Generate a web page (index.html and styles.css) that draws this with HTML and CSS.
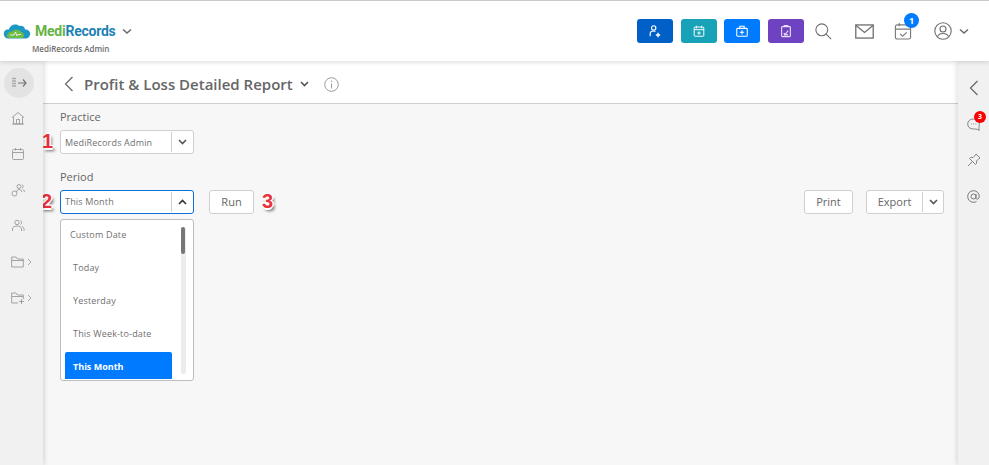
FILE: index.html
```html
<!DOCTYPE html>
<html lang="en">
<head>
<meta charset="utf-8">
<title>Profit &amp; Loss Detailed Report</title>
<link rel="stylesheet" href="styles.css">
</head>
<body>
<div class="app">
  <header class="topbar">
    <div class="brand">
      <div class="brand-row">
        <svg class="logo" width="28" height="16" viewBox="0 0 28 16"><path d="M1 12C0 8 3 6 6 6.500C7 2 13 0 16 3C19 2 22 4 22 6.500C25 6 28 9 27 12C26 15 24 15.500 22 15.500H5C3 15.500 1.500 14 1 12Z" fill="#1d97c4"/><path d="M4 13C4 10 7 8 9 8.500C11 6 17 6 18 9C20 9 21 11 21 13C21 14.500 20 15 18 15H7C5 15 4 14.500 4 13Z" fill="#6dbb45"/><path d="M7 12H11L12.500 9L14 13L15 11.500H18" fill="none" stroke="#fff" stroke-width=".8"/></svg>
        <span class="brand-name"><span class="medi">Medi</span><span class="records">Records</span></span>
        <svg class="brand-caret" width="10" height="7" viewBox="0 0 10 7"><path d="M1 1.500L5 5L9 1.500" fill="none" stroke="#6b6b6b" stroke-width="1.600"/></svg>
      </div>
      <div class="brand-sub">MediRecords Admin</div>
    </div>
    <div class="top-actions">
      <button class="quick q-blue"><svg width="14" height="14" viewBox="0 0 16 16" fill="none" stroke="#fff" stroke-width="1.300"><circle cx="6.500" cy="4.500" r="2.500"/><path d="M2.500 14V11C2.500 9 4 8 6.500 8C7.500 8 8 8.200 8.500 8.500"/><path d="M9 12.500H14M11.500 10V15" stroke-width="1.600"/></svg></button>
      <button class="quick q-teal"><svg width="14" height="14" viewBox="0 0 16 16" fill="none" stroke="#fff" stroke-width="1.100"><rect x="2.500" y="3.500" width="11" height="10.500" rx="1"/><path d="M2.500 6.500H13.500M5 2V5M11 2V5M6 10.300H10M8 8.300V12.300"/></svg></button>
      <button class="quick q-sky"><svg width="14" height="14" viewBox="0 0 16 16" fill="none" stroke="#fff" stroke-width="1.200"><rect x="2" y="5" width="12" height="9" rx="1"/><path d="M5.500 5V2.500H10.500V5M5.500 9.500H10.500M8 7V12"/></svg></button>
      <button class="quick q-purple"><svg width="14" height="14" viewBox="0 0 16 16" fill="none" stroke="#e6dcf5" stroke-width="1.300"><rect x="3" y="3" width="10" height="11.500" rx="1"/><path d="M6 3V1.800H10V3M5.500 10.500L7 12L10.500 7.500M5.500 12.500H10.500" /></svg></button>
      <svg class="ico-search" width="17" height="17" viewBox="0 0 20 20" fill="none" stroke="#6f6f6f" stroke-width="1.300"><circle cx="8" cy="8" r="7"/><path d="M12.800 12.800L19 19"/></svg>
      <svg class="ico-mail" width="19" height="15" viewBox="0 0 20 16" fill="none" stroke="#6f6f6f" stroke-width="1.400"><rect x=".7" y="1" width="18.600" height="14"/><path d="M1 1.500L10 9L19 1.500"/></svg>
      <div class="ico-task">
        <svg width="18" height="18" viewBox="0 0 18 19" fill="none" stroke="#7a7a7a" stroke-width="1.200"><rect x="1" y="3" width="16" height="15" rx="2"/><path d="M1 7.500H17M5 1V4.500M13 1V4.500M6 12.500L8.500 15L13 11"/></svg>
        <span class="task-badge">1</span>
      </div>
      <svg class="ico-user" width="18" height="18" viewBox="0 0 18 18" fill="none" stroke="#6f6f6f" stroke-width="1.100"><circle cx="9" cy="9" r="8.200"/><circle cx="9" cy="7" r="3"/><path d="M3.500 14.500C4.500 12 6.500 11.500 9 11.500C11.500 11.500 13.500 12 14.500 14.500"/></svg>
      <svg class="user-caret" width="10" height="7" viewBox="0 0 10 7"><path d="M1 1.500L5 5L9 1.500" fill="none" stroke="#6b6b6b" stroke-width="1.500"/></svg>
    </div>
  </header>
  <div class="body-row">
    <nav class="rail-left">
      <div class="rail-toggle"><svg width="16" height="14" viewBox="0 0 16 14" fill="none" stroke="#777" stroke-width="1.200"><path d="M1 2.500H5M1 5H5M1 7.500H5M1 10H5" stroke="#aaa" stroke-width="1.400"/><path d="M7 7H15M12 3.500L15 7L12 10.500"/></svg></div>
      <ul class="rail-items">
        <li><svg width="14" height="14" viewBox="0 0 14 14" fill="none" stroke="#9a9a9a" stroke-width=".9"><path d="M1 6.500L7 1.500L13 6.500M2.500 6V13H11.500V6M5.500 13V8.500H8.500V13M1 13H13"/></svg></li>
        <li><svg width="14" height="14" viewBox="0 0 14 14" fill="none" stroke="#9a9a9a" stroke-width=".9"><rect x="1.500" y="2.500" width="11" height="10" rx="1"/><path d="M1.500 5.500H12.500M4.500 1V3.500M9.500 1V3.500"/></svg></li>
        <li><svg width="14" height="14" viewBox="0 0 14 14" fill="none" stroke="#9a9a9a" stroke-width=".9"><circle cx="8" cy="3.500" r="2"/><circle cx="3.500" cy="10.500" r="2.500"/><path d="M5.500 9C6 7 7 6.500 8 6.500C9.500 6.500 11 7.500 11 9M11 1.800C12.500 2 12.500 5 11 5.300M12 6.500C13 7 13.500 8 13.500 9"/></svg></li>
        <li><svg width="14" height="14" viewBox="0 0 14 14" fill="none" stroke="#9a9a9a" stroke-width=".9"><circle cx="6" cy="3.500" r="2.200"/><path d="M1.500 12V10C1.500 8 3.500 7 6 7C8.500 7 10.500 8 10.500 10V12M9.500 1.500C11 2 11 5 9.500 5.500M11 7.500C12.500 8 13 9 13 10.500V12"/></svg></li>
        <li class="with-arrow"><svg width="13" height="12" viewBox="0 0 13 12" fill="none" stroke="#9a9a9a" stroke-width=".9"><path d="M.7 11V1H5L6.500 3H12.300V11ZM.7 4.500H12.300"/></svg><svg width="5" height="8" viewBox="0 0 5 8"><path d="M1 1L4 4L1 7" fill="none" stroke="#aaa"/></svg></li>
        <li class="with-arrow"><svg width="13" height="12" viewBox="0 0 13 12" fill="none" stroke="#9a9a9a" stroke-width=".9"><path d="M7 11H.7V1H5L6.500 3H12.300V7M.7 4.500H12.300M8 9.500H13M10.500 7V12"/></svg><svg width="5" height="8" viewBox="0 0 5 8"><path d="M1 1L4 4L1 7" fill="none" stroke="#aaa"/></svg></li>
      </ul>
    </nav>
    <main class="main">
      <div class="title-bar">
        <svg class="back" width="10" height="16" viewBox="0 0 10 16"><path d="M8.500 1L1.500 8L8.500 15" fill="none" stroke="#666" stroke-width="1.200"/></svg>
        <h1>Profit &amp; Loss Detailed Report</h1>
        <svg class="title-caret" width="9" height="6" viewBox="0 0 9 6"><path d="M1 1L4.500 4.500L8 1" fill="none" stroke="#555" stroke-width="1.600"/></svg>
        <svg class="info" width="15" height="15" viewBox="0 0 15 15" fill="none" stroke="#9a9a9a"><circle cx="7.500" cy="7.500" r="6.800"/><path d="M7.500 6.500V11.500M7.500 3.500V5"/></svg>
      </div>
      <div class="content">
        <label class="field-label">Practice</label>
        <div class="select">
          <span class="select-text">MediRecords Admin</span>
          <span class="select-btn"><svg width="9" height="6" viewBox="0 0 9 6"><path d="M1 1L4.500 4.500L8 1" fill="none" stroke="#555" stroke-width="1.600"/></svg></span>
          <span class="mark mark-1">1</span>
        </div>
        <label class="field-label period-label">Period</label>
        <div class="period-row">
          <div class="select select-open">
            <span class="select-text">This Month</span>
            <span class="select-btn"><svg width="9" height="6" viewBox="0 0 9 6"><path d="M1 5L4.500 1.500L8 5" fill="none" stroke="#333" stroke-width="1.600"/></svg></span>
            <span class="mark mark-2">2</span>
            <div class="dropdown">
              <ul>
                <li class="opt-first">Custom Date</li>
                <li>Today</li>
                <li>Yesterday</li>
                <li>This Week-to-date</li>
                <li class="opt-active">This Month</li>
              </ul>
              <div class="scrollbar"><div class="thumb"></div></div>
            </div>
          </div>
          <button class="btn btn-run">Run<span class="mark mark-3">3</span></button>
          <div class="spacer"></div>
          <button class="btn btn-print">Print</button>
          <div class="btn-split">
            <span class="split-label">Export</span>
            <span class="split-arrow"><svg width="9" height="6" viewBox="0 0 9 6"><path d="M1 1L4.500 4.500L8 1" fill="none" stroke="#555" stroke-width="1.600"/></svg></span>
          </div>
        </div>
      </div>
    </main>
    <aside class="rail-right">
      <svg width="10" height="16" viewBox="0 0 10 16"><path d="M8.500 1L1.500 8L8.500 15" fill="none" stroke="#666" stroke-width="1.200"/></svg>
      <div class="chat">
        <svg width="13" height="13" viewBox="0 0 13 13" fill="none" stroke="#777" stroke-width=".9"><path d="M6.500 1C3 1 .7 3 .7 6C.7 9 3 11 6.500 11C8 11 9.500 10.800 12.300 12.300C11.500 10.500 12.300 8 12.300 6C12.300 3 10 1 6.500 1Z"/><path d="M4 6H4.800M6.200 6H7M8.400 6H9.200"/></svg>
        <span class="chat-badge">3</span>
      </div>
      <svg width="14" height="14" viewBox="0 0 14 14" fill="none" stroke="#777" stroke-width=".9"><path d="M9 1L13 5L12 5.500L9.500 8L9.500 10.500L8.500 11.500L2.500 5.500L3.500 4.500L6 4.500L8.500 2ZM5.500 8.500L1 13"/></svg>
      <svg class="ico-at" width="13" height="13" viewBox="0 0 13 13" fill="none" stroke="#777"><circle cx="6.500" cy="6.500" r="2.500"/><path d="M9 4V8C9 10 12.300 9.500 12.300 6.500C12.300 3 9.500 .7 6.500 .7C3 .7 .7 3.500 .7 6.500C.7 10 3.500 12.300 6.500 12.300C7.800 12.300 8.800 12 9.500 11.500"/></svg>
    </aside>
  </div>
</div>
</body>
</html>
```
FILE: styles.css
```css
* { box-sizing: border-box; }
html, body { margin: 0; padding: 0; height: 100%; overflow: hidden; }
body { font-family: "Open Sans", "Noto Sans", sans-serif; color: #666; background: #f7f7f7; }
button { font-family: inherit; }
ul { list-style: none; margin: 0; padding: 0; }

.app { width: 989px; height: 465px; display: flex; flex-direction: column; }

.topbar {
  height: 61px; flex: none; background: #fff; border-top: 1px solid #c9c9c9;
  display: flex; align-items: center; justify-content: space-between;
  box-shadow: 0 1px 5px rgba(0,0,0,.16); position: relative; z-index: 3;
}
.brand { padding: 21px 0 0 3px; width: 200px; align-self: flex-start; }
.brand-row { display: flex; align-items: center; height: 18px; }
.logo { margin-right: 4px; }
.brand-name { font-family: "Roboto", sans-serif; font-size: 14px; font-weight: 700; letter-spacing: -.25px; }
.medi { color: #67b346; }
.records { color: #1f82b5; }
.brand-caret { margin-left: 7px; }
.brand-sub { font-size: 8px; line-height: 11px; margin: 3px 0 0 29px; color: #6e6e6e; font-weight: 600; }

.top-actions { display: flex; align-items: center; height: 100%; padding-right: 20px; }
.quick { width: 36px; height: 24px; border: 0; border-radius: 3px; padding: 0; margin-right: 8px; display: flex; align-items: center; justify-content: center; }
.q-blue { background: #0160c8; }
.q-teal { background: #17a2b8; margin-right: 7px; }
.q-sky { background: #007bff; }
.q-purple { background: #6f42c1; margin-right: 0; }
.ico-search { margin: 0 0 0 11px; }
.ico-mail { margin-left: 23px; }
.ico-task { position: relative; margin-left: 20px; height: 18px; }
.ico-task svg { display: block; }
.task-badge {
  position: absolute; left: 10px; top: -9px; width: 15px; height: 15px; border-radius: 50%;
  background: #007bff; color: #fff; font-size: 9px; font-weight: 700; line-height: 15px; text-align: center;
}
.ico-user { margin-left: 22px; }
.user-caret { margin-left: 7px; }

.body-row { flex: 1; display: flex; min-height: 0; }

.rail-left {
  width: 43px; flex: none; background: #f1f1f1; box-shadow: 1px 0 5px rgba(0,0,0,.16);
  position: relative; z-index: 2; display: flex; flex-direction: column; align-items: flex-start;
}
.rail-toggle { width: 30px; height: 30px; border-radius: 50%; background: #e3e3e3; margin: 7px 0 0 4px; display: flex; align-items: center; justify-content: center; }
.rail-items { margin-top: 2px; width: 100%; }
.rail-items li { height: 36px; display: flex; align-items: center; padding-left: 11px; gap: 3px; }

.main { flex: 1; min-width: 0; display: flex; flex-direction: column; }
.title-bar {
  height: 43px; flex: none; background: #fff; border-bottom: 1px solid #cfcfcf;
  display: flex; align-items: center; padding: 4px 0 0 21px;
}
.title-bar h1 { margin: 0 0 0 10px; font-size: 15px; line-height: 22px; font-weight: 600; color: #666; }
.title-caret { margin-left: 7px; }
.info { margin-left: 15px; }

.content { padding: 5px 14px 0 17px; flex: 1; position: relative; }
.field-label { display: block; font-size: 11px; line-height: 15px; color: #666; font-weight: 400; height: 15px; }
.period-label { margin-top: 15px; }

.select {
  width: 134px; height: 24px; margin-top: 6px; background: #fff; border: 1px solid #cfcfcf; border-radius: 3px;
  display: flex; align-items: center; position: relative;
}
.select-text { flex: 1; font-size: 9px; padding-left: 4px; color: #707070; font-weight: 500; letter-spacing: .17px; }
.select-btn { width: 22px; height: 20px; border-left: 1px solid #cfcfcf; display: flex; align-items: center; justify-content: center; }
.select-open { border-color: #0a6fd8; flex: none; margin-top: 0; }
.select-open .select-text { padding-bottom: 1px; }
.period-row { display: flex; align-items: center; margin-top: 6px; position: relative; }
.spacer { flex: 1; }

.btn { height: 24px; background: #fff; border: 1px solid #cfcfcf; border-radius: 3px; font-size: 11px; color: #666; font-weight: 400; padding: 0 0 2px; }
.btn-run { width: 45px; margin-left: 15px; position: relative; }
.btn-print { width: 49px; }
.btn-split { width: 78px; height: 24px; margin-left: 13px; background: #fff; border: 1px solid #cfcfcf; border-radius: 3px; display: flex; align-items: center; font-size: 11px; font-weight: 400; color: #666; }
.split-label { width: 55px; text-align: center; padding-bottom: 2px; }
.split-arrow { flex: 1; height: 20px; border-left: 1px solid #cfcfcf; display: flex; align-items: center; justify-content: center; }

.mark {
  position: absolute; font-family: "Liberation Sans", sans-serif; font-size: 20px; line-height: 22px; color: #e8323c; font-weight: 700;
  text-shadow: -1.5px 0 0 #fff, 1.5px 0 0 #fff, 0 -1.5px 0 #fff, 0 1.5px 0 #fff, -1px -1px 0 #fff, 1px -1px 0 #fff, -1px 1px 0 #fff, 2px 3px 3px rgba(0,0,0,.6);
}
.mark-1 { left: -19px; top: -1px; }
.mark-2 { left: -20px; top: -1px; }
.mark-3 { left: 52px; top: -1px; }

.dropdown {
  position: absolute; left: -1px; top: 28px; width: 134px; height: 162px; background: #fff;
  border: 1px solid #bdbdbd; border-radius: 3px; z-index: 1; overflow: hidden; padding-left: 4px;
}
.dropdown ul { width: 107px; }
.dropdown li { height: 33px; line-height: 29px; font-size: 9px; font-weight: 500; letter-spacing: .17px; color: #707070; padding-left: 8px; }
.dropdown .opt-first { padding-left: 5px; }
.dropdown .opt-active { background: #007bff; color: #fff; font-weight: 700; height: 27px; line-height: 29px; border-radius: 2px 2px 0 0; letter-spacing: 0; }
.scrollbar { position: absolute; left: 120px; top: 7px; width: 5px; height: 147px; background: #ececec; border-radius: 2px; }
.thumb { width: 4px; height: 27px; background: #777; border-radius: 2px; }

.rail-right {
  width: 31px; flex: none; background: #f1f1f1; box-shadow: -1px 0 5px rgba(0,0,0,.14);
  display: flex; flex-direction: column; align-items: center; position: relative; z-index: 2;
  padding: 19px 0 0 0; gap: 22px;
}
.chat { position: relative; height: 13px; }
.chat svg { display: block; }
.ico-at { margin-top: 1px; }
.chat-badge { position: absolute; left: 7px; top: -7px; width: 12px; height: 12px; border-radius: 50%; background: #f00; color: #fff; font-size: 7px; line-height: 12px; text-align: center; font-weight: 700; }
```
